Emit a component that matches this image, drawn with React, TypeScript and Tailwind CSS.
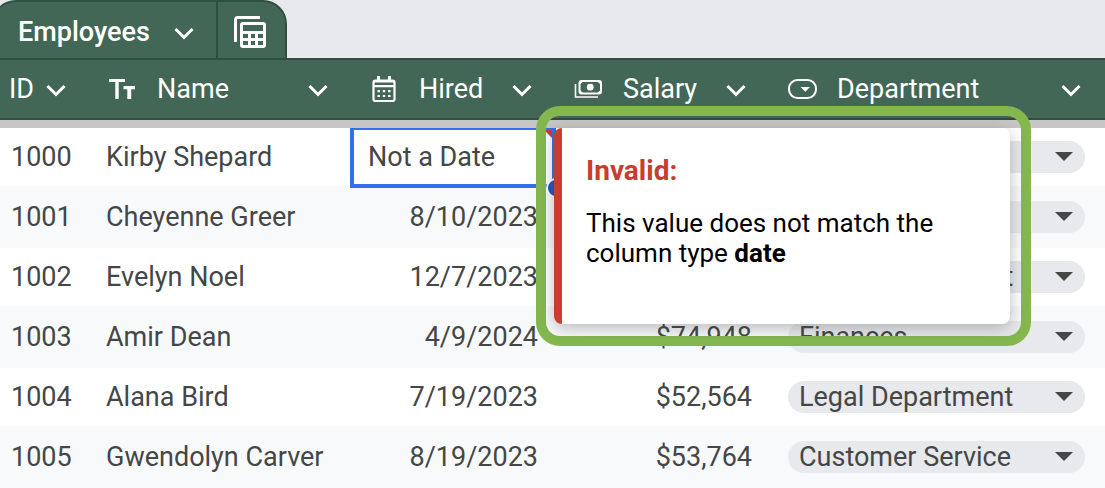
import React, { useState } from 'react';

type ColumnKey = 'name' | 'hired' | 'salary' | 'department';

interface Employee {
  id: number;
  name: string;
  hired: string;
  salary?: string;
  department: string;
}

const employees: Employee[] = [
  { id: 1000, name: 'Kirby Shepard', hired: 'Not a Date', department: 'Finances' },
  { id: 1001, name: 'Cheyenne Greer', hired: '8/10/2023', department: 'Finances' },
  { id: 1002, name: 'Evelyn Noel', hired: '12/7/2023', department: 'Legal Department' },
  { id: 1003, name: 'Amir Dean', hired: '4/9/2024', salary: '$74,948', department: 'Finances' },
  { id: 1004, name: 'Alana Bird', hired: '7/19/2023', salary: '$52,564', department: 'Legal Department' },
  { id: 1005, name: 'Gwendolyn Carver', hired: '8/19/2023', salary: '$53,764', department: 'Customer Service' },
];

const departments = ['Finances', 'Legal Department', 'Customer Service'];

const Chevron = () => (
  <svg width="20" height="20" viewBox="0 0 20 20" fill="none" stroke="currentColor" strokeWidth="3" aria-hidden="true">
    <path d="M1.500 7l8.500 8.500L18.500 7" />
  </svg>
);

const TextIcon = () => (
  <svg width="30" height="30" viewBox="0 0 30 30" fill="currentColor" aria-hidden="true">
    <path d="M1 5h16v3h-6.300v17H7.300V8H1z" />
    <path d="M15.500 12H27v3.200h-3.800V25h-3.900v-9.800h-3.800z" />
  </svg>
);

const CalendarIcon = () => (
  <svg width="30" height="30" viewBox="0 0 30 30" fill="none" stroke="currentColor" strokeWidth="2.200" aria-hidden="true">
    <rect x="3.500" y="6.500" width="21" height="20.500" rx="2" />
    <path d="M3.500 7.500h21M3.500 12.200h21" strokeWidth="2.200" />
    <path d="M8.500 2v4M19.500 2v4" strokeWidth="3" />
    <path d="M7.500 17.200h2.400M12.800 17.200h2.400M18.100 17.200h2.400M7.500 22h2.400M12.800 22h2.400M18.100 22h2.400" strokeWidth="2.200" />
  </svg>
);

const MoneyIcon = () => (
  <svg width="30" height="30" viewBox="0 0 30 30" fill="none" stroke="currentColor" strokeWidth="2" aria-hidden="true">
    <rect x="5.500" y="7" width="21.500" height="12.500" rx="2" />
    <circle cx="16.200" cy="13.200" r="3.400" fill="currentColor" stroke="none" />
    <path d="M6 7h3.500L6 10.500zM26.500 7H23l3.500 3.500zM6 19.500h3.500L6 16zM26.500 19.500H23l3.500-3.500z" fill="currentColor" stroke="none" />
    <path d="M1.500 10v13h22.500" strokeWidth="1.600" />
  </svg>
);

const DropdownIcon = () => (
  <svg width="30" height="30" viewBox="0 0 30 30" fill="none" stroke="currentColor" strokeWidth="2" aria-hidden="true">
    <rect x="1" y="6" width="27" height="18" rx="8.500" />
    <path d="M12.500 13h9.500l-4.700 4.800z" fill="currentColor" stroke="none" />
  </svg>
);

const TableViewsIcon = () => (
  <svg width="34" height="34" viewBox="0 0 34 34" fill="none" stroke="currentColor" aria-hidden="true">
    <path d="M2.500 27V4.500a2 2 0 0 1 2-2H27" strokeWidth="3" />
    <path
      fill="currentColor"
      stroke="none"
      fillRule="evenodd"
      d="M10 7h20a3 3 0 0 1 3 3v20a3 3 0 0 1-3 3H10a3 3 0 0 1-3-3V10a3 3 0 0 1 3-3zM10 10v6h20v-6zM10 19v4h5v-4zM18 19v4h4v-4zM25 19v4h5v-4zM10 26v4h5v-4zM18 26v4h4v-4zM25 26v4h5v-4z"
    />
  </svg>
);

const columns: { key: ColumnKey; label: string; icon: React.ReactNode }[] = [
  { key: 'name', label: 'Name', icon: <TextIcon /> },
  { key: 'hired', label: 'Hired', icon: <CalendarIcon /> },
  { key: 'salary', label: 'Salary', icon: <MoneyIcon /> },
  { key: 'department', label: 'Department', icon: <DropdownIcon /> },
];

const DepartmentSelect = ({ value, employee }: { value: string; employee: string }) => {
  const [selected, setSelected] = useState(value);

  return (
    <div className="relative">
      <select
        aria-label={`Department of ${employee}`}
        value={selected}
        onChange={(e) => setSelected(e.target.value)}
        className="block w-full h-8 pl-[11px] pr-12 appearance-none rounded-full bg-[#e8e9ed] text-[#444746] leading-8"
      >
        {departments.map((department) => (
          <option key={department}>{department}</option>
        ))}
      </select>
      <svg
        className="absolute right-3 top-[11px] pointer-events-none text-[#444746]"
        width="18"
        height="9"
        viewBox="0 0 18 9"
        fill="currentColor"
        aria-hidden="true"
      >
        <path d="M0 0h18L9 9z" />
      </svg>
    </div>
  );
};

const InvalidTooltip = () => (
  <div className="absolute z-20 left-[184px] -top-[22px] w-[495px] border-10 border-[#84b84f] rounded-3xl py-3 pl-2 pr-[11px]">
    <div
      role="tooltip"
      className="bg-white border-l-8 border-[#c93d2f] rounded-lg pl-6 pr-12 pt-7 pb-14 text-[26px] text-black leading-[30px] shadow-[0_4px_16px_rgba(60,64,67,0.35)]"
    >
      <p className="text-[28px] leading-[30px] font-bold text-[#c93d2f]">Invalid:</p>
      <p className="mt-[22px]">
        This value does not match the column type <b>date</b>
      </p>
    </div>
  </div>
);

const InvalidCell = ({ value }: { value: string }) => (
  <td className="relative px-4">
    {value}
    {/* selection outline, error corner and fill handle */}
    <div className="absolute top-0 -bottom-0.5 -left-0.5 right-0 border-4 border-t-2 border-[#3271ea]">
      <svg className="absolute right-0 top-0" width="8" height="8" viewBox="0 0 8 8" aria-hidden="true">
        <path d="M0 0h8v8z" fill="#c93d2f" />
      </svg>
    </div>
    <span className="absolute -right-2.5 -bottom-3 size-5 rounded-full border-2 border-white bg-[#1f55c9]"></span>
    <InvalidTooltip />
  </td>
);

const App: React.FC = () => {
  return (
    <div className="min-h-screen overflow-hidden bg-[#e8e9ed] font-['Roboto',sans-serif] text-[27px]">
      {/* Table tab */}
      <div className="flex h-[58px] -ml-2 text-white">
        <button className="flex items-center gap-6 pl-[26px] pr-[22px] bg-[#436756] border-t-2 border-r-2 border-[#2f4f40] rounded-tl-3xl font-medium pt-1">
          Employees
          <Chevron />
        </button>
        <button
          aria-label="Table views"
          className="flex items-center pl-[15px] pr-[18px] pt-1 bg-[#436756] border-t-2 border-r-2 border-[#2f4f40] rounded-tr-3xl"
        >
          <TableViewsIcon />
        </button>
      </div>

      <table className="w-full table-fixed border-collapse text-left">
        <colgroup>
          <col className="w-[90px]" />
          <col className="w-[262px]" />
          <col className="w-[204px]" />
          <col className="w-[214px]" />
          <col />
        </colgroup>
        <thead>
          <tr className="h-[62px] bg-[#436756] text-white shadow-[inset_0_2px_#2f4f40,inset_0_-2px_#2f4f40]">
            <th className="p-0 font-normal">
              <button className="flex items-center gap-3 pl-[9px]">
                ID
                <Chevron />
              </button>
            </th>
            {columns.map((column) => (
              <th key={column.key} className="p-0 font-normal">
                <button className="flex items-center w-full pl-[18px] pr-6 text-left">
                  {column.icon}
                  <span className="flex-1 pl-[19px]">{column.label}</span>
                  <Chevron />
                </button>
              </th>
            ))}
          </tr>
          <tr aria-hidden="true">
            <td colSpan={5} className="h-2 p-0 bg-[#c6c6c6]"></td>
          </tr>
        </thead>
        <tbody className="text-[#444746]">
          {employees.map((employee) => (
            <tr key={employee.id} className="h-[58px] bg-white even:h-[62px] even:bg-[#f8f9fb]">
              <td className="pl-[11px]">{employee.id}</td>
              <td className="px-4">{employee.name}</td>
              {employee.hired === 'Not a Date' ? (
                <InvalidCell value={employee.hired} />
              ) : (
                <td className="pr-[18px] text-right">{employee.hired}</td>
              )}
              <td className="pr-[18px] text-right">{employee.salary}</td>
              <td className="pl-[18px] pr-5">
                <DepartmentSelect value={employee.department} employee={employee.name} />
              </td>
            </tr>
          ))}
        </tbody>
      </table>
    </div>
  );
};

export default App;
